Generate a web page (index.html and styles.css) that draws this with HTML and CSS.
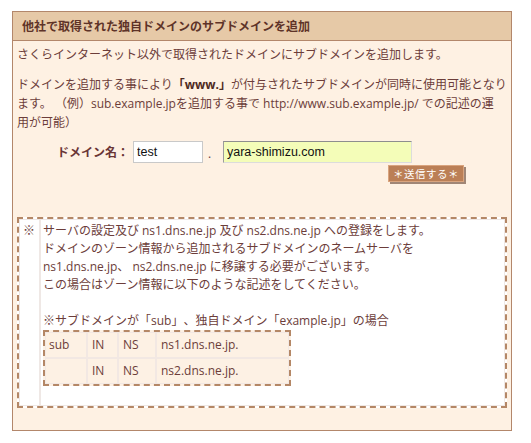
FILE: index.html
```html
<!DOCTYPE html>
<html lang="ja">
<head>
<meta charset="utf-8">
<title>サブドメインを追加</title>
<link rel="stylesheet" href="styles.css">
</head>
<body>
<div class="panel">
  <h2 class="panel-head">他社で取得された独自ドメインのサブドメインを追加</h2>
  <div class="panel-body">
    <p class="lead">さくらインターネット以外で取得されたドメインにサブドメインを追加します。</p>
    <p class="desc">ドメインを追加する事により<strong>「www.」</strong>が付与されたサブドメインが同時に使用可能となり<br>ます。 （例）sub.example.jpを追加する事で http://www.sub.example.jp/ での記述の運<br>用が可能）</p>
    <form class="domain-form">
      <div class="field-row">
        <label class="field-label" for="sub">ドメイン名：</label>
        <input id="sub" class="in-sub" type="text" value="test">
        <span class="dot">.</span>
        <input class="in-domain" type="text" value="yara-shimizu.com">
      </div>
      <div class="submit-row">
        <button type="button" class="submit">＊送信する＊</button>
      </div>
    </form>
    <table class="note">
      <tr>
        <td class="note-mark">※</td>
        <td class="note-body">サーバの設定及び ns1.dns.ne.jp 及び ns2.dns.ne.jp への登録をします。<br>ドメインのゾーン情報から追加されるサブドメインのネームサーバを<br>ns1.dns.ne.jp、 ns2.dns.ne.jp に移譲する必要がございます。<br>この場合はゾーン情報に以下のような記述をしてください。<br><br>※サブドメインが「sub」、独自ドメイン「example.jp」の場合
          <table class="zone">
            <tr><td class="c-name">sub</td><td class="c-in">IN</td><td class="c-ns">NS</td><td class="c-val">ns1.dns.ne.jp.</td></tr>
            <tr><td class="c-name"></td><td class="c-in">IN</td><td class="c-ns">NS</td><td class="c-val">ns2.dns.ne.jp.</td></tr>
          </table>
        </td>
      </tr>
    </table>
  </div>
</div>
</body>
</html>
```
FILE: styles.css
```css
* { box-sizing: border-box; }
body {
  margin: 0;
  background: #fff;
  font-family: "Open Sans", "Noto Sans CJK JP", sans-serif;
  font-size: 12px;
  color: #6c3d3a;
  text-spacing-trim: space-all;
}
.panel {
  margin: 11px 0 0 12px;
  width: 500px;
  border: 1px solid #b3876b;
  background: #fef1e3;
}
.panel-head {
  margin: 0;
  height: 29px;
  line-height: 29px;
  padding-left: 9px;
  background: #e6c9a7;
  border-bottom: 1px solid #b3876b;
  font-size: 12px;
  font-weight: bold;
  color: #5e3328;
}
.panel-body {
  padding: 4px 4px 22px 4px;
}
.panel-body p {
  margin: 0;
  line-height: 19px;
}
.lead { margin-bottom: 11px !important; }
.desc strong { color: #4e2a22; }
.domain-form { margin-top: 9px; }
.field-row {
  display: flex;
  align-items: center;
  padding-left: 40px;
  height: 22px;
}
.field-label {
  width: 76px;
  font-weight: bold;
  color: #6a3535;
}
.field-row input {
  height: 22px;
  margin: 0;
  padding: 0 3px;
  font-family: "Liberation Sans", Arial, sans-serif;
  font-size: 12.5px;
  color: #111;
  outline: none;
}
.in-sub {
  width: 70px;
  border: 1px solid #c9c9c9;
  background: #fff;
}
.dot {
  margin: 0 12px 0 5px;
  width: 3px;
  align-self: flex-end;
  line-height: 18px;
}
.in-domain {
  width: 189px;
  background: #f4fdb8;
  border: 1px solid #dcdcdc;
  border-top-color: #8e8e8e;
  border-left-color: #9c9c9c;
}
.submit-row {
  display: flex;
  justify-content: flex-end;
  padding-right: 43px;
  margin-top: 2px;
  height: 20px;
}
.submit {
  width: 76px;
  height: 17px;
  padding: 0;
  margin: 0;
  border: 1px solid #d9a47e;
  background: #bb7f56;
  box-shadow: 2px 2px 0 #a08676;
  color: #fff;
  font-family: "Noto Sans CJK JP", sans-serif;
  font-size: 10.5px;
  line-height: 15px;
  letter-spacing: 0.5px;
}
.note {
  margin-top: 32px;
  width: 100%;
  border: 2px dashed #b48766;
  border-collapse: separate;
  border-spacing: 0;
  background: #fff;
}
.note > tbody > tr > td {
  border: 1px solid #efe8e5;
  vertical-align: top;
  line-height: 18px;
}
.note-mark {
  width: 21px;
  padding: 2px 0 0 3px;
}
.note-body {
  padding: 2px 0 19px 2px;
}
.zone {
  border: 2px dashed #b48766;
  border-collapse: separate;
  border-spacing: 0;
  background: #fdf1e4;
}
.zone td {
  border: 1px solid #f2e8e3;
  padding: 3px 4px;
  line-height: 18px;
  height: 26px;
}
.zone .c-name { width: 42px; padding-left: 3px; }
.zone .c-in { width: 31px; }
.zone .c-ns { width: 38px; }
.zone .c-val { width: 133px; }
```
